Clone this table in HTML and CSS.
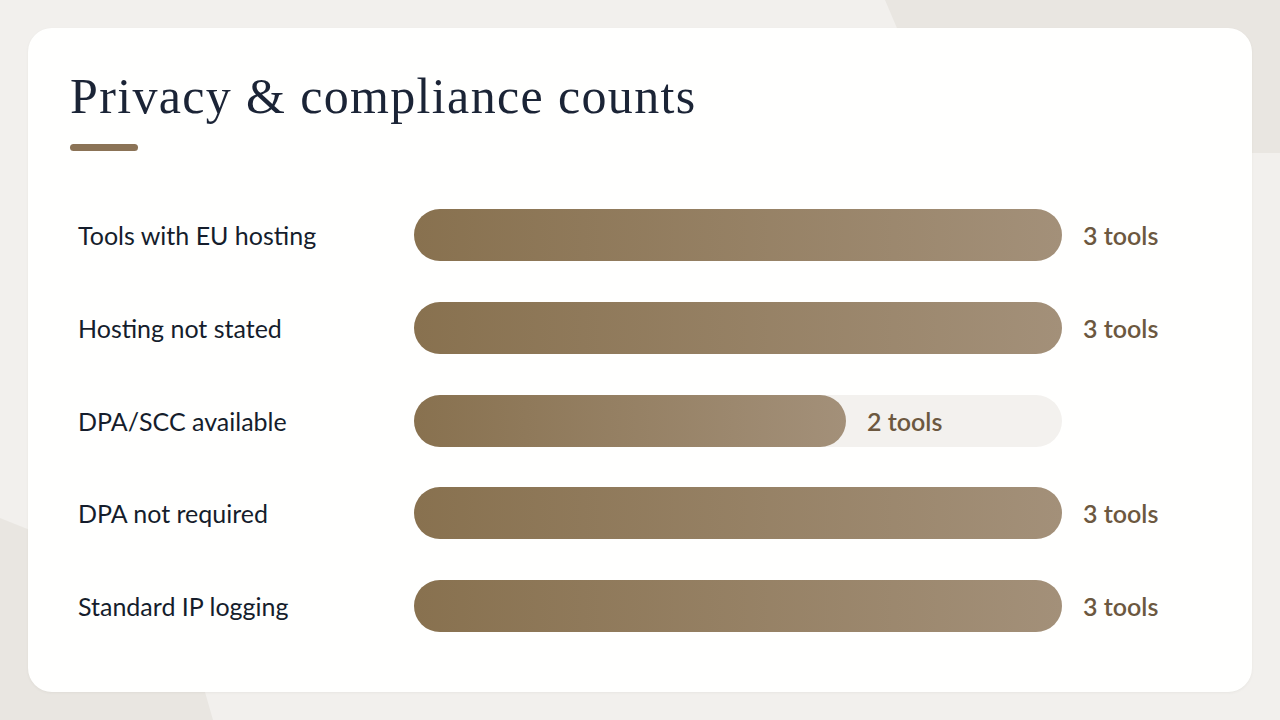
FILE: index.html
```html
<!DOCTYPE html>
<html lang="en">
<head>
<meta charset="utf-8">
<title>Privacy &amp; compliance counts</title>
<link rel="stylesheet" href="styles.css">
</head>
<body>
<div class="bg-shape bg-shape-tr"></div>
<div class="bg-shape bg-shape-bl"></div>
<main class="card">
  <h1 class="title">Privacy &amp; compliance counts</h1>
  <div class="title-rule"></div>
  <div class="rows">
    <div class="row">
      <div class="label">Tools with EU hosting</div>
      <div class="track"><div class="fill" style="width:100%"></div><span class="value">3 tools</span></div>
    </div>
    <div class="row">
      <div class="label">Hosting not stated</div>
      <div class="track"><div class="fill" style="width:100%"></div><span class="value">3 tools</span></div>
    </div>
    <div class="row">
      <div class="label">DPA/SCC available</div>
      <div class="track"><div class="fill" style="width:66.667%"></div><span class="value">2 tools</span></div>
    </div>
    <div class="row">
      <div class="label">DPA not required</div>
      <div class="track"><div class="fill" style="width:100%"></div><span class="value">3 tools</span></div>
    </div>
    <div class="row">
      <div class="label">Standard IP logging</div>
      <div class="track"><div class="fill" style="width:100%"></div><span class="value">3 tools</span></div>
    </div>
  </div>
</main>
</body>
</html>
```
FILE: styles.css
```css
* { box-sizing: border-box; }
html, body { margin: 0; padding: 0; }
body {
  width: 1280px;
  height: 720px;
  overflow: hidden;
  background: #f2f0ed;
  position: relative;
  padding: 28px;
  font-family: "Lato", "Noto Sans", sans-serif;
}
.bg-shape {
  position: absolute;
  inset: 0;
  background: #e9e6e1;
}
.bg-shape-tr {
  clip-path: polygon(885px 0, 1280px 0, 1280px 153px, 950px 153px);
}
.bg-shape-bl {
  clip-path: polygon(0 518px, 40px 534px, 205px 692px, 213px 720px, 0 720px);
}
.card {
  position: relative;
  height: 664px;
  background: #fffffe;
  border-radius: 24px;
  padding: 40px 42px 60px;
  box-shadow: 0 1px 3px rgba(60, 50, 40, 0.05);
}
.title {
  margin: 0;
  font-family: "Liberation Serif", "DejaVu Serif", serif;
  font-weight: 400;
  font-size: 50px;
  line-height: 56px;
  color: #1b2436;
  letter-spacing: 1.35px;
}
.title-rule {
  margin-top: 20px;
  width: 68px;
  height: 7px;
  border-radius: 4px;
  background: #8b7356;
}
.rows {
  margin-top: 58px;
  display: flex;
  flex-direction: column;
  gap: 40.75px;
}
.row {
  display: flex;
  align-items: center;
  height: 52px;
  padding-left: 8px;
}
.label {
  width: 336px;
  flex-shrink: 0;
  font-size: 25px;
  color: #151d2c;
}
.track {
  width: 648px;
  height: 52px;
  border-radius: 26px;
  background: #f3f1ee;
  display: flex;
  align-items: center;
}
.fill {
  height: 52px;
  flex-shrink: 0;
  border-radius: 26px;
  background: linear-gradient(90deg, #88714f 0%, #a39079 100%);
}
.value {
  flex-shrink: 0;
  margin-left: 21px;
  font-size: 25px;
  font-weight: 600;
  color: #6c5840;
  white-space: nowrap;
}
```
